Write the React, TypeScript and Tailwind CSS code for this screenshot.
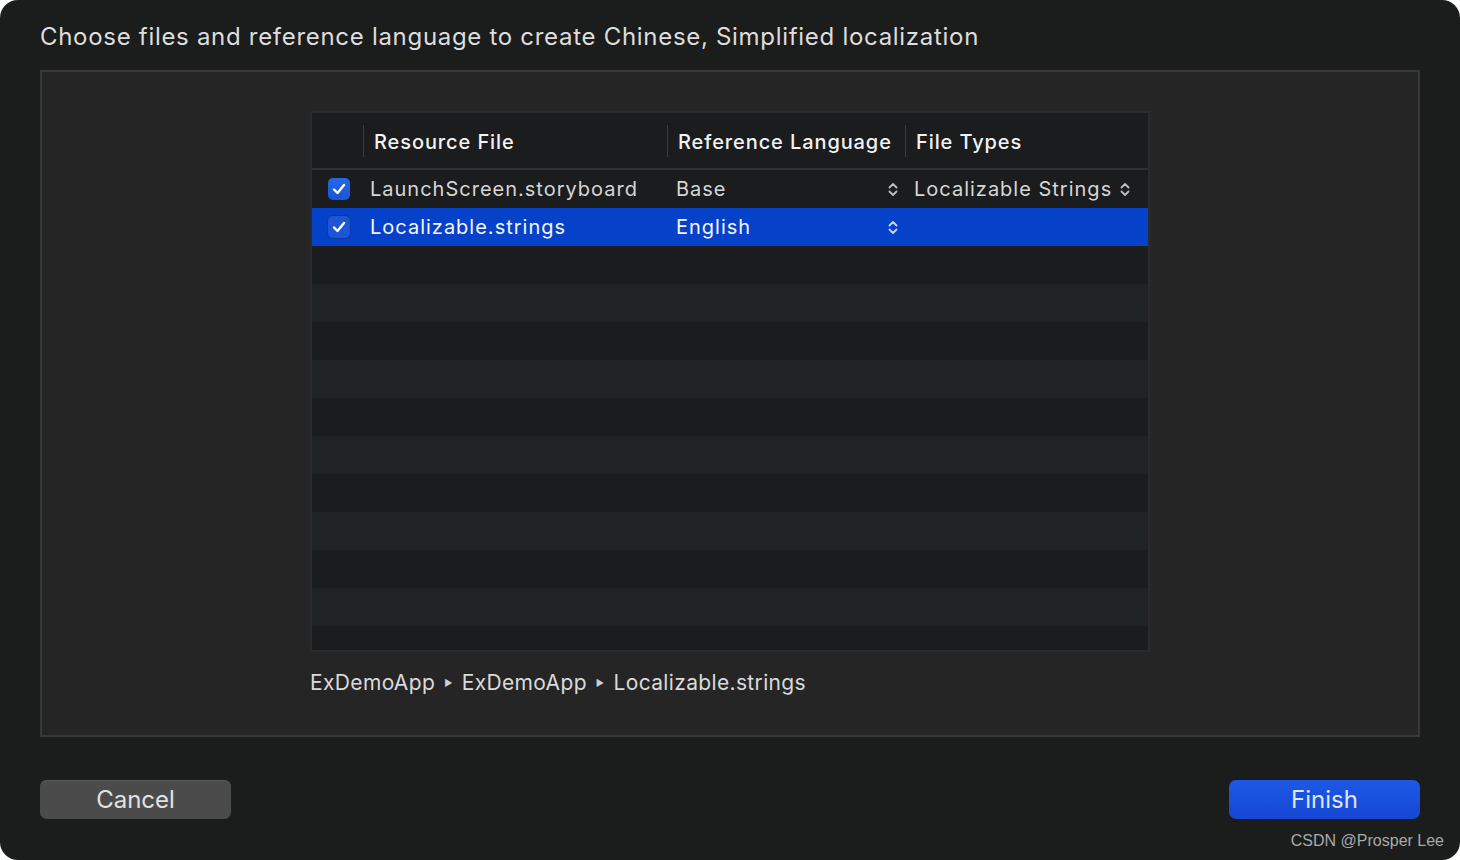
import React from 'react';

const rows = [
  { file: 'LaunchScreen.storyboard', lang: 'Base', type: 'Localizable Strings' },
  { file: 'Localizable.strings', lang: 'English', type: '' },
];

function UpDown({ className = '' }: { className?: string }) {
  return (
    <svg width="10" height="15" viewBox="0 0 10 15" fill="none" className={className} aria-hidden="true">
      <path d="M1.5 5.5 L5 2 L8.5 5.5" stroke="currentColor" strokeWidth="1.8" strokeLinecap="round" strokeLinejoin="round" />
      <path d="M1.5 9.5 L5 13 L8.5 9.5" stroke="currentColor" strokeWidth="1.8" strokeLinecap="round" strokeLinejoin="round" />
    </svg>
  );
}

function Checkbox({ selected }: { selected: boolean }) {
  return (
    <div
      className={`flex h-[22px] w-[22px] items-center justify-center rounded-[5px] ${
        selected ? 'bg-[#1d55d6] shadow-[0_0_0_1px_#0a3aa8]' : 'bg-gradient-to-b from-[#2468e8] to-[#1a56d4]'
      }`}
    >
      <svg width="14" height="12" viewBox="0 0 14 12" fill="none" aria-hidden="true">
        <path d="M2 6.5 L5.5 10 L12 2" stroke="white" strokeWidth="2.4" strokeLinecap="round" strokeLinejoin="round" />
      </svg>
    </div>
  );
}

function HeaderCell({ label, width }: { label: string; width: string }) {
  return (
    <div className={`flex h-full items-center ${width}`}>
      <div className="h-[32px] w-px bg-[#3a3c3d]" />
      <span className="pl-[10px] pt-[2px] text-[20px] font-medium tracking-[0.9px] text-[#f2f2f2]">{label}</span>
    </div>
  );
}

export default function App() {
  const stripes = Array.from({ length: 11 }, (_, i) => i);

  return (
    <div className="h-[860px] w-[1460px] bg-white" style={{ fontFamily: 'Inter, "Noto Sans", sans-serif' }}>
      <div className="flex h-full flex-col rounded-[18px] bg-[#1b1c1c] px-10">
        <div className="flex h-[70px] items-start pt-[21px]">
          <h1 className="text-[24px] leading-[32px] tracking-[0.7px] text-[#dddddd]">
            Choose files and reference language to create Chinese, Simplified localization
          </h1>
        </div>

        <div className="flex h-[667px] flex-col border-2 border-[#383838] bg-[#252525] pl-[268px] pt-[39px]">
          <div className="h-[541px] w-[840px] overflow-hidden border-2 border-[#2a2b2c] bg-[#1a1c1d]">
            <div className="flex h-[55px] items-center">
              <div className="w-[51px]" />
              <HeaderCell label="Resource File" width="w-[304px]" />
              <HeaderCell label="Reference Language" width="w-[238px]" />
              <HeaderCell label="File Types" width="flex-1" />
            </div>
            <div className="h-[2px] bg-[#2e3031]" />

            {rows.map((r, i) => {
              const selected = i === 1;
              return (
                <div
                  key={r.file}
                  className={`flex h-[38px] items-center tracking-[1px] ${selected ? 'bg-[#0641c9] text-[#f3f6ff]' : 'text-[#d6d6d6]'}`}
                >
                  <div className="flex w-[51px] justify-center pl-[2px]">
                    <Checkbox selected={selected} />
                  </div>
                  <div className="w-[304px] pl-[7px] text-[20px]">{r.file}</div>
                  <div className="flex w-[238px] items-center justify-between pl-[9px] pr-[7px] text-[20px]">
                    <span>{r.lang}</span>
                    <UpDown className={selected ? 'text-[#c9d6ff]' : 'text-[#bdbdbd]'} />
                  </div>
                  <div className="flex flex-1 items-center gap-[8px] pl-[9px] text-[20px]">
                    {r.type && (
                      <>
                        <span>{r.type}</span>
                        <UpDown className="text-[#bdbdbd]" />
                      </>
                    )}
                  </div>
                </div>
              );
            })}

            {stripes.map((i) => (
              <div key={i} className={`h-[38px] ${i % 2 === 0 ? 'bg-[#1a1c1d]' : 'bg-[#202324]'}`} />
            ))}
          </div>

          <div className="mt-[15px] flex items-center gap-[9px] text-[21px] tracking-[0.35px] text-[#dadada]">
            <span>ExDemoApp</span>
            <span className="text-[9px] text-[#cfcfcf]">▶</span>
            <span>ExDemoApp</span>
            <span className="text-[9px] text-[#cfcfcf]">▶</span>
            <span>Localizable.strings</span>
          </div>
        </div>

        <div className="mt-[43px] flex items-center justify-between">
          <button className="h-[39px] w-[191px] rounded-[7px] bg-[#4b4b4b] text-[24px] text-[#e2e2e2] shadow-[inset_0_1px_0_#5a5a5a]">
            Cancel
          </button>
          <button className="h-[39px] w-[191px] rounded-[7px] bg-gradient-to-b from-[#1d58e6] to-[#1547d2] text-[24px] text-[#dde6ff]">
            Finish
          </button>
        </div>

        <div className="mt-[12px] flex justify-end">
          <span
            className="mr-[-24px] text-[16px] leading-[20px] text-[#a9a9a9]"
            style={{ fontFamily: '"Liberation Sans", Arial, sans-serif' }}
          >
            CSDN @Prosper Lee
          </span>
        </div>
      </div>
    </div>
  );
}
